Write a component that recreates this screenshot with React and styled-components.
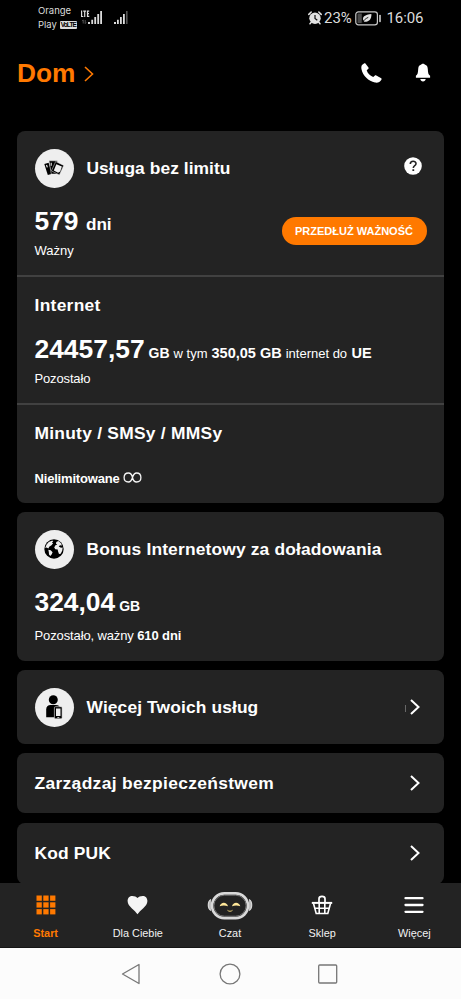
import React from "react";
import styled, { createGlobalStyle } from "styled-components";

const GlobalStyle = createGlobalStyle`
  * { box-sizing: border-box; }
  body { margin: 0; background: #000; }
`;

const Screen = styled.div`
  width: 461px;
  height: 999px;
  display: flex;
  flex-direction: column;
  background: #000;
  color: #fff;
  font-family: "Liberation Sans", Arial, sans-serif;
  overflow: hidden;
  white-space: nowrap;
`;

const StatusBar = styled.div`
  height: 36px;
  flex: none;
  display: flex;
  justify-content: space-between;
  padding: 0 37px 0 38px;
  color: #dcdcdc;
  font-family: Roboto, sans-serif;
`;

const StatusLeft = styled.div`
  display: flex;
  align-items: flex-start;
  padding-top: 4px;
`;

const Carriers = styled.div`
  width: 42px;
  font-size: 9.5px;
  line-height: 14px;
  font-family: Inter, sans-serif;
`;

const Carrier = styled.div`
  display: flex;
  align-items: center;
  gap: 3px;
`;

const Volte = styled.span`
  width: 17px;
  height: 8px;
  border-radius: 1px;
  background: #dcdcdc;
  color: #000;
  font: 700 6.5px/8px "Liberation Sans", sans-serif;
  letter-spacing: -0.9px;
  text-align: center;
`;

const StatusRight = styled.div`
  display: flex;
  align-items: center;
  height: 36px;
`;

const StatusText = styled.span`
  font-size: 15px;
  line-height: 18px;
  width: ${(p) => p.$w}px;
  letter-spacing: ${(p) => p.$ls || 0}px;
  margin-left: ${(p) => p.$ml || 0}px;
`;

const Header = styled.header`
  height: 95px;
  flex: none;
  display: flex;
  align-items: flex-start;
  padding: 22px 30px 0 17px;
`;

const Home = styled.h1`
  margin: 0;
  flex: 1;
  display: flex;
  align-items: center;
  height: 31px;
  font-size: 26.3px;
  line-height: 31px;
  color: #ff7900;
  gap: 9px;
`;

const HeaderActions = styled.div`
  display: flex;
  gap: 33px;
  padding-top: 5px;
`;

const Content = styled.main`
  height: 752px;
  flex: none;
  display: flex;
  flex-direction: column;
  padding: 0 17px;
  overflow: hidden;
`;

const Card = styled.section`
  flex: none;
  height: ${(p) => p.$h}px;
  margin-bottom: 9.25px;
  border-radius: 8px;
  background: #232323;
  overflow: hidden;
`;

const Block = styled.div`
  height: ${(p) => p.$h}px;
  border-bottom: 2px solid #414141;
  &:last-child { border-bottom: 0; }
`;

const CardHead = styled.div`
  height: ${(p) => p.$h || 74}px;
  display: flex;
  align-items: center;
  padding: 0 17.5px;
  gap: 13px;
`;

const IconCircle = styled.span`
  width: 39px;
  height: 39px;
  flex: none;
  border-radius: 50%;
  background: #eee;
  display: flex;
  align-items: center;
  justify-content: center;
`;

const Title = styled.h2`
  margin: 0;
  flex: 1;
  font-size: 17.4px;
  line-height: 24px;
  letter-spacing: ${(p) => p.$ls || 0}px;
`;

const SectionTitle = styled(Title)`
  padding: 16px 17.5px 17px;
`;

const Line = styled.div`
  height: ${(p) => p.$h}px;
  line-height: ${(p) => p.$h}px;
  padding: 0 17.5px;
  font-size: ${(p) => p.$size || 13}px;
  font-weight: ${(p) => (p.$bold ? 700 : 400)};
  letter-spacing: ${(p) => p.$ls || 0}px;
`;

const Part = styled.span`
  font-size: ${(p) => p.$size}px;
  font-weight: ${(p) => (p.$regular ? 400 : 700)};
  margin-left: ${(p) => p.$ml || 0}px;
  letter-spacing: ${(p) => p.$ls || 0}px;
`;

const ValueRow = styled.div`
  display: flex;
  justify-content: space-between;
  height: 58px;
`;

const ExtendButton = styled.button`
  width: 145px;
  height: 28px;
  margin: 12px 17.5px 0 0;
  padding: 0;
  border: 0;
  border-radius: 14px;
  background: #ff7900;
  color: #fff;
  font: 700 11px/28px "Liberation Sans", Arial, sans-serif;
`;

const Infinity = styled.svg`
  margin-left: 3px;
  vertical-align: 0;
`;

const TrailGroup = styled.span`
  display: flex;
  align-items: center;
  gap: 4px;
  margin-right: 7px;
`;

const Tick = styled.span`
  width: 1px;
  height: 7px;
  margin-top: 3px;
  background: #686868;
`;

const HelpIcon = styled.svg`
  margin: -5px 4.5px 0 0;
`;

const TabBar = styled.nav`
  height: 65px;
  flex: none;
  display: grid;
  grid-template-columns: repeat(5, 92.2px);
  background: #232323;
  border-bottom: 1px solid #151515;
`;

const Tab = styled.div`
  display: flex;
  flex-direction: column;
  align-items: center;
  padding-right: 1px;
  font-size: 10.9px;
  line-height: 14px;
  color: ${(p) => (p.$active ? "#ff7900" : "#f2f2f2")};
  font-weight: ${(p) => (p.$active ? 700 : 400)};
`;

const TabIcon = styled.span`
  height: 43px;
  display: flex;
  align-items: center;
  justify-content: center;
`;

const SystemNav = styled.div`
  height: 51px;
  flex: none;
  display: flex;
  justify-content: center;
  align-items: center;
  gap: 74px;
  padding: 0 1px 0 0;
  background: #fcfcfc;
`;

const Signal = () => (
  <svg width="50" height="22" viewBox="80 4 50 22">
    <g fill="none" stroke="#dcdcdc" strokeWidth="1.200">
      <path d="M81.600 10.500v6h1.700M83.200 11.100h2.900M84.700 11v6M89.200 11.100h-1.700v5.300h1.800M87.600 13.700h1.400" />
    </g>
    <g fill="#dcdcdc">
      <path d="M88 22h2v2h-2zM91.300 19.800h1.800V24h-1.800zM94.300 17h1.800v7h-1.800zM97.300 14h1.800v10h-1.800zM100.200 11h1.800v13h-1.800z" />
      <path d="M114 22h2v2h-2zM117 19.800h1.800V24H117zM120 17h1.800v7H120zM123 14h1.800v10H123z" />
    </g>
    <path d="M126 11h1.600v13H126z" fill="#555" />
    <path d="M83.200 23.500v-3.600l-1 1.200M85.200 20v3.600l1-1.200" fill="none" stroke="#666" strokeWidth=".8" />
  </svg>
);

const Alarm = () => (
  <svg width="14" height="14" viewBox="0 0 14 14">
    <circle cx="7" cy="7.200" r="5.700" fill="#e2e2e2" />
    <path d="M.8 3.400 3.200 1M13.200 3.400 10.800 1M3 11.600l-1 1.200M11 11.600l1 1.200" stroke="#e2e2e2" strokeWidth="1.500" strokeLinecap="round" />
    <path d="M7 4v3.500l2.300 1.800" fill="none" stroke="#111" strokeWidth="1.200" />
  </svg>
);

const Battery = () => (
  <svg width="27" height="15" viewBox="0 0 27 15">
    <rect x=".8" y=".8" width="21.600" height="13" rx="2.600" fill="none" stroke="#c9c9c9" strokeWidth="1.200" />
    <path d="M2.500 2.500h4.300v9.600H2.500z" fill="#4a4a4a" />
    <path d="M25 4.500v6" stroke="#dcdcdc" strokeWidth="1.500" strokeLinecap="round" />
    <path d="M16.400 3c.2 5-2 8-7.200 7.800C5.500 6 10.500 3.500 16.400 3Z" fill="#e2e2e2" />
    <path d="M6.800 12.300c1.500-2.800 3.500-4.500 6.500-6" fill="none" stroke="#111" strokeWidth=".9" />
  </svg>
);

const Phone = () => (
  <svg width="21" height="20" viewBox="0 0 21 20">
    <path d="M1.300 1.800 3 .6c.5-.4 1.200-.3 1.600.2l2.700 3.400c.5.600.4 1.300-.2 1.800L5.700 7.200c.9 3 3.200 5.400 6.500 6.800l1.500-1.300c.4-.4 1-.5 1.600-.1l4.500 2.500c.8.400 1 1.100.6 1.700-1.400 2.300-3.600 3.200-6.400 2.700C7.500 18.300 1.900 12.800.5 6.300.1 4.400.3 2.800 1.300 1.800Z" fill="#fff" />
  </svg>
);

const Bell = () => (
  <svg width="16" height="20" viewBox="0 0 16 20">
    <path d="M8 .8c1 0 1.500.3 1.700.7 2.200.6 3 2.200 3.100 4.500.2 4 .5 5.700 2.300 6.700v2H.9v-2c1.800-1 2.100-2.700 2.300-6.700.1-2.300.9-3.900 3.100-4.500.2-.4.700-.7 1.700-.7ZM5.300 16h5.400c-.2 1.600-1.200 2.400-2.700 2.400S5.500 17.600 5.300 16Z" fill="#fff" />
  </svg>
);

const Chevron = ({ w = 10, h = 16, color = "#fff", sw = 2 }) => (
  <svg width={w} height={h} viewBox={`0 0 ${w} ${h}`}>
    <path d={`M1 1 ${w - 1.5} ${h / 2} 1 ${h - 1}`} fill="none" stroke={color} strokeWidth={sw} />
  </svg>
);

const Cards = () => (
  <svg width="22" height="18" viewBox="0 0 22 18">
    <path d="m1.300 5.100 4.300-1.400 3.500 11-4.300 1.400Z" fill="#000" />
    <path d="m3.500 6 .8 2.400" stroke="#eee" strokeWidth="1.200" />
    <path d="M6 1.800h8.300v13.200H8.300Z" fill="#000" stroke="#eee" strokeWidth=".5" />
    <path d="M8.200 3.700v3M11 8.500v3" stroke="#eee" strokeWidth="1.100" />
    <path d="m12.700 2.500 8 3.900-4.300 9.500-8-4Z" fill="#000" stroke="#eee" strokeWidth=".5" />
    <path d="m13.300 5.300 5.600 2.200-1.700 5-2.100 1.300-4.300-2.300Z" fill="#eee" />
  </svg>
);

const Globe = () => (
  <svg width="20" height="20" viewBox="0 0 20 20">
    <circle cx="10" cy="10" r="9.700" fill="#000" />
    <path d="M2.600 5.500 4.800 3 8.300 1.500l1 1-1.500.8 1.300 1-1.600 2-2.300 1.500-.8 1.800L2.500 8.400 1.200 9ZM4.300 10.800l2.400.5 1.900 1.900-1 2.200L6.300 17l-1.300-1.500-.2-2.500Z" fill="#eee" />
    <path d="m12.300 3 2-.9 2.500 1.900 1.200 2.500-2-.2-1.300 1.200 2.300 1.300 1.700-.3-.5 3.300-1.500 3-1.700.2-1-2.700-.3-1.800-2.400-.2-1.100-1.900 1.200-2.200 1.900-.4-1.300-1.100Z" fill="#eee" />
  </svg>
);

const Person = () => (
  <svg width="18" height="26" viewBox="0 0 18 26">
    <circle cx="8.300" cy="5.700" r="4.500" fill="#000" />
    <path d="M1.200 15.500c0-3 1.500-4.500 4.500-4.500h5.200c2.800 0 4.300 1.500 4.300 4.200v8H1.200Z" fill="#000" />
    <rect x="9.400" y="12.700" width="7.700" height="12.100" rx="1" fill="#000" stroke="#eee" strokeWidth=".6" />
    <path d="M11 14.600h4.500v7.300H11zM12.300 23.100h2v.7h-2z" fill="#eee" />
  </svg>
);

const Grid = () => (
  <svg width="20" height="20" viewBox="0 0 20 20" fill="#ff7900">
    {[0.5, 7.3, 14.1].map((y) =>
      [0.5, 7.3, 14.1].map((x) => <rect key={`${x}-${y}`} x={x} y={y} width="5.300" height="5.300" />)
    )}
  </svg>
);

const Heart = () => (
  <svg width="21" height="20" viewBox="0 0 21 20">
    <path d="M10.500 19.300C8.200 15.200.6 11.500.6 5.900.6 2.800 2.700.9 5.300.9c2.300 0 4.100.8 5.200 2 1.100-1.200 2.900-2 5.200-2 2.600 0 4.700 1.900 4.700 5 0 5.600-7.600 9.300-9.900 13.400Z" fill="#f4f4f4" />
  </svg>
);

const Robot = () => (
  <svg width="46" height="30" viewBox="0 0 46 30">
    <path d="M4 9.500C2 10.500 1.300 12.500 1.300 15s.7 4.500 2.700 5.500M42 9.500c2 1 2.700 3 2.700 5.500s-.7 4.500-2.700 5.500" fill="#bbb" stroke="#d9d9d9" strokeWidth="1.200" />
    <rect x="5" y="3.300" width="36" height="24.800" rx="12.400" fill="#222" stroke="#d9d9d9" strokeWidth="2.700" />
    <rect x="6.900" y="5.200" width="32.200" height="21" rx="10.500" fill="none" stroke="#888" strokeWidth=".8" />
    <path d="M12.700 16.300c1-4.800 7.200-4.800 8.300 0-2.600-1-5.700-1-8.300 0ZM25 16.300c1-4.800 7.200-4.800 8.300 0-2.600-1-5.700-1-8.300 0Z" fill="#ffe79a" />
    <path d="M20.500 20.300c1.500 1.300 3.500 1.300 5 0" fill="none" stroke="#e8cd78" strokeWidth="1" />
  </svg>
);

const Basket = () => (
  <svg width="22" height="20" viewBox="0 0 22 20" fill="none" stroke="#fff">
    <path d="M8 8.300V3.700C8 .5 14 .5 14 3.700v4.600" strokeWidth="1.700" />
    <path d="M.8 7.900h20.400" strokeWidth="2" />
    <path d="m2.500 8.500 2.700 10h11.600l2.700-10M3.600 13.300h14.800M8.200 8v10.500M13.800 8v10.500" strokeWidth="1.600" />
  </svg>
);

const Burger = () => (
  <svg width="20" height="18" viewBox="0 0 20 18">
    <path d="M1.500 2.200h17M1.500 9h17M1.500 15.800h17" stroke="#fff" strokeWidth="2.300" strokeLinecap="round" />
  </svg>
);

const tabs = [
  { label: "Start", icon: Grid, active: true },
  { label: "Dla Ciebie", icon: Heart },
  { label: "Czat", icon: Robot },
  { label: "Sklep", icon: Basket },
  { label: "Więcej", icon: Burger },
];

export default function App() {
  return (
    <Screen>
      <GlobalStyle />
      <StatusBar>
        <StatusLeft>
          <Carriers>
            <Carrier>Orange</Carrier>
            <Carrier>Play <Volte>VoLTE</Volte></Carrier>
          </Carriers>
          <Signal />
        </StatusLeft>
        <StatusRight>
          <Alarm />
          <StatusText $w={30.5} $ml={2.5}>23%</StatusText>
          <Battery />
          <StatusText $w={37.5} $ml={5} $ls={-0.1}>16:06</StatusText>
        </StatusRight>
      </StatusBar>

      <Header>
        <Home>
          Dom
          <Chevron w={10} h={16} color="#ff7900" sw={1.6} />
        </Home>
        <HeaderActions>
          <Phone />
          <Bell />
        </HeaderActions>
      </Header>

      <Content>
        <Card $h={372}>
          <Block $h={146}>
            <CardHead>
              <IconCircle><Cards /></IconCircle>
              <Title $ls={0.06}>Usługa bez limitu</Title>
              <HelpIcon width="18" height="18" viewBox="0 0 18 18">
                <circle cx="9" cy="9" r="8.800" fill="#fff" />
                <path d="M6.300 7.100c0-3.800 5.700-3.700 5.700-.4 0 2-2.700 2-2.700 4.300" fill="none" stroke="#222" strokeWidth="1.600" />
                <path d="M8.400 12.300h1.800v1.800H8.400z" fill="#222" />
              </HelpIcon>
            </CardHead>
            <ValueRow>
              <div>
                <Line $h={33} $size={26.4} $bold>579<Part $size={17.2} $ml={7.5} $ls={-0.1}>dni</Part></Line>
                <Line $h={25}>Ważny</Line>
              </div>
              <ExtendButton>PRZEDŁUŻ WAŻNOŚĆ</ExtendButton>
            </ValueRow>
          </Block>
          <Block $h={128}>
            <SectionTitle $ls={0.3}>Internet</SectionTitle>
            <Line $h={31} $size={26.4} $bold>
              24457,57
              <Part $size={14} $ml={4}>GB</Part>
              <Part $size={13} $ml={4} $regular>w tym</Part>
              <Part $size={14.5} $ml={4}>350,05 GB</Part>
              <Part $size={13} $ml={4} $regular>internet do</Part>
              <Part $size={14.5} $ml={4.5}>UE</Part>
            </Line>
            <Line $h={27} $ls={-0.15}>Pozostało</Line>
          </Block>
          <Block $h={98}>
            <SectionTitle $ls={0.26}>Minuty / SMSy / MMSy</SectionTitle>
            <Line $h={33} $ls={-0.18} $bold>
              Nielimitowane
              <Infinity width="19" height="11" viewBox="0 0 19 11">
                <path d="M9.500 5.500C8.900 2.600 7.600 1 5.400 1 2.900 1 1.100 2.900 1.100 5.500S2.900 10 5.400 10C7.700 10 8.700 8.200 9.500 5.500S11.300 1 13.600 1c2.500 0 4.300 1.900 4.300 4.500S16.100 10 13.600 10c-2.200 0-3.500-1.600-4.100-4.500Z" fill="none" stroke="#f4f4f4" strokeWidth="1.300" />
              </Infinity>
            </Line>
          </Block>
        </Card>

        <Card $h={148.5}>
          <CardHead>
            <IconCircle><Globe /></IconCircle>
            <Title $ls={0.16}>Bonus Internetowy za doładowania</Title>
          </CardHead>
          <Line $h={33} $size={26.4} $bold>324,04<Part $size={14} $ml={4}>GB</Part></Line>
          <Line $h={34} $ls={-0.12}>Pozostało, ważny <b>610 dni</b></Line>
        </Card>

        <Card $h={73.5}>
          <CardHead>
            <IconCircle><Person /></IconCircle>
            <Title $ls={0.12}>Więcej Twoich usług</Title>
            <TrailGroup><Tick /><Chevron /></TrailGroup>
          </CardHead>
        </Card>

        <Card $h={60.5}>
          <CardHead $h={60.5}>
            <Title $ls={0.34}>Zarządzaj bezpieczeństwem</Title>
            <TrailGroup><Chevron /></TrailGroup>
          </CardHead>
        </Card>

        <Card $h={61}>
          <CardHead $h={61}>
            <Title $ls={0.15}>Kod PUK</Title>
            <TrailGroup><Chevron /></TrailGroup>
          </CardHead>
        </Card>
      </Content>

      <TabBar>
        {tabs.map(({ label, icon: Icon, active }) => (
          <Tab key={label} $active={active}>
            <TabIcon><Icon /></TabIcon>
            {label}
          </Tab>
        ))}
      </TabBar>

      <SystemNav>
        <svg width="24" height="24" viewBox="0 0 24 24">
          <path d="M19 2.500v19L2.500 12Z" fill="none" stroke="#777" strokeWidth="1.300" strokeLinejoin="round" />
        </svg>
        <svg width="24" height="24" viewBox="0 0 24 24">
          <circle cx="12" cy="12" r="9.900" fill="none" stroke="#777" strokeWidth="1.300" />
        </svg>
        <svg width="24" height="24" viewBox="0 0 24 24">
          <rect x="2.700" y="3" width="18" height="18" rx="1" fill="none" stroke="#777" strokeWidth="1.300" />
        </svg>
      </SystemNav>
    </Screen>
  );
}
